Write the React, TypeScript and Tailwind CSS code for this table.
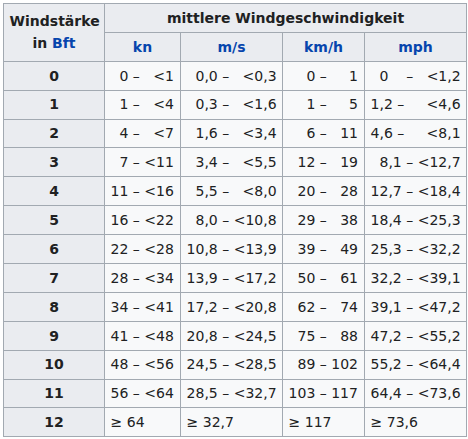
import React from 'react';

// text inside {…} is kept invisible, it only holds the width of digits for alignment
const pad = (s: string) =>
  s.split(/(\{[^}]*\})/).map((part, i) =>
    part.startsWith('{') ? (
      <span key={i} className="invisible">
        {part.slice(1, -1)}
      </span>
    ) : (
      part
    )
  );

const rows: string[][] = [
  ['0', '{0}0 – {0}<1', '{0}0,0 – {0}<0,3', '{00}0 – {00}1', '{0}0{,0} – {0}<1,2'],
  ['1', '{0}1 – {0}<4', '{0}0,3 – {0}<1,6', '{00}1 – {00}5', '1,2 – {00}<4,6'],
  ['2', '{0}4 – {0}<7', '{0}1,6 – {0}<3,4', '{00}6 – {0}11', '4,6 – {00}<8,1'],
  ['3', '{0}7 – <11', '{0}3,4 – {0}<5,5', '{0}12 – {0}19', '{0}8,1 – <12,7'],
  ['4', '11 – <16', '{0}5,5 – {0}<8,0', '{0}20 – {0}28', '12,7 – <18,4'],
  ['5', '16 – <22', '{0}8,0 – <10,8', '{0}29 – {0}38', '18,4 – <25,3'],
  ['6', '22 – <28', '10,8 – <13,9', '{0}39 – {0}49', '25,3 – <32,2'],
  ['7', '28 – <34', '13,9 – <17,2', '{0}50 – {0}61', '32,2 – <39,1'],
  ['8', '34 – <41', '17,2 – <20,8', '{0}62 – {0}74', '39,1 – <47,2'],
  ['9', '41 – <48', '20,8 – <24,5', '{0}75 – {0}88', '47,2 – <55,2'],
  ['10', '48 – <56', '24,5 – <28,5', '{0}89 – 102', '55,2 – <64,4'],
  ['11', '56 – <64', '28,5 – <32,7', '103 – 117', '64,4 – <73,6'],
  ['12', '≥ 64', '≥ 32,7', '≥ 117', '≥ 73,6'],
];

const th = 'border border-[#a2a9b1] bg-[#eaecf0] px-[5.6px] py-[2.8px] text-center font-bold';
const td = 'border border-[#a2a9b1] bg-[#f8f9fa] px-[5.6px] py-[2.8px] whitespace-pre';
const link = 'text-[#0645ad]';

export default function App() {
  return (
    <div className="bg-white p-[3px] font-['DejaVu_Sans',sans-serif] text-[14px] leading-[22.3px] text-[#202122]">
      <table className="table-fixed border-collapse w-[463px]">
        <colgroup>
          <col className="w-[101px]" />
          <col className="w-[76px]" />
          <col className="w-[102px]" />
          <col className="w-[82px]" />
          <col className="w-[102px]" />
        </colgroup>
        <thead>
          <tr>
            <th rowSpan={2} className={th}>
              Windstärke in <span className={link}>Bft</span>
            </th>
            <th colSpan={4} className={th}>
              mittlere Windgeschwindigkeit
            </th>
          </tr>
          <tr>
            <th className={th}><span className={link}>kn</span></th>
            <th className={th}><span className={link}>m/s</span></th>
            <th className={th}><span className={link}>km/h</span></th>
            <th className={th}><span className={link}>mph</span></th>
          </tr>
        </thead>
        <tbody>
          {rows.map((r) => (
            <tr key={r[0]}>
              <th className={th}>{r[0]}</th>
              {r.slice(1).map((c, i) => (
                <td key={i} className={td}>
                  {pad(c)}
                </td>
              ))}
            </tr>
          ))}
        </tbody>
      </table>
    </div>
  );
}
